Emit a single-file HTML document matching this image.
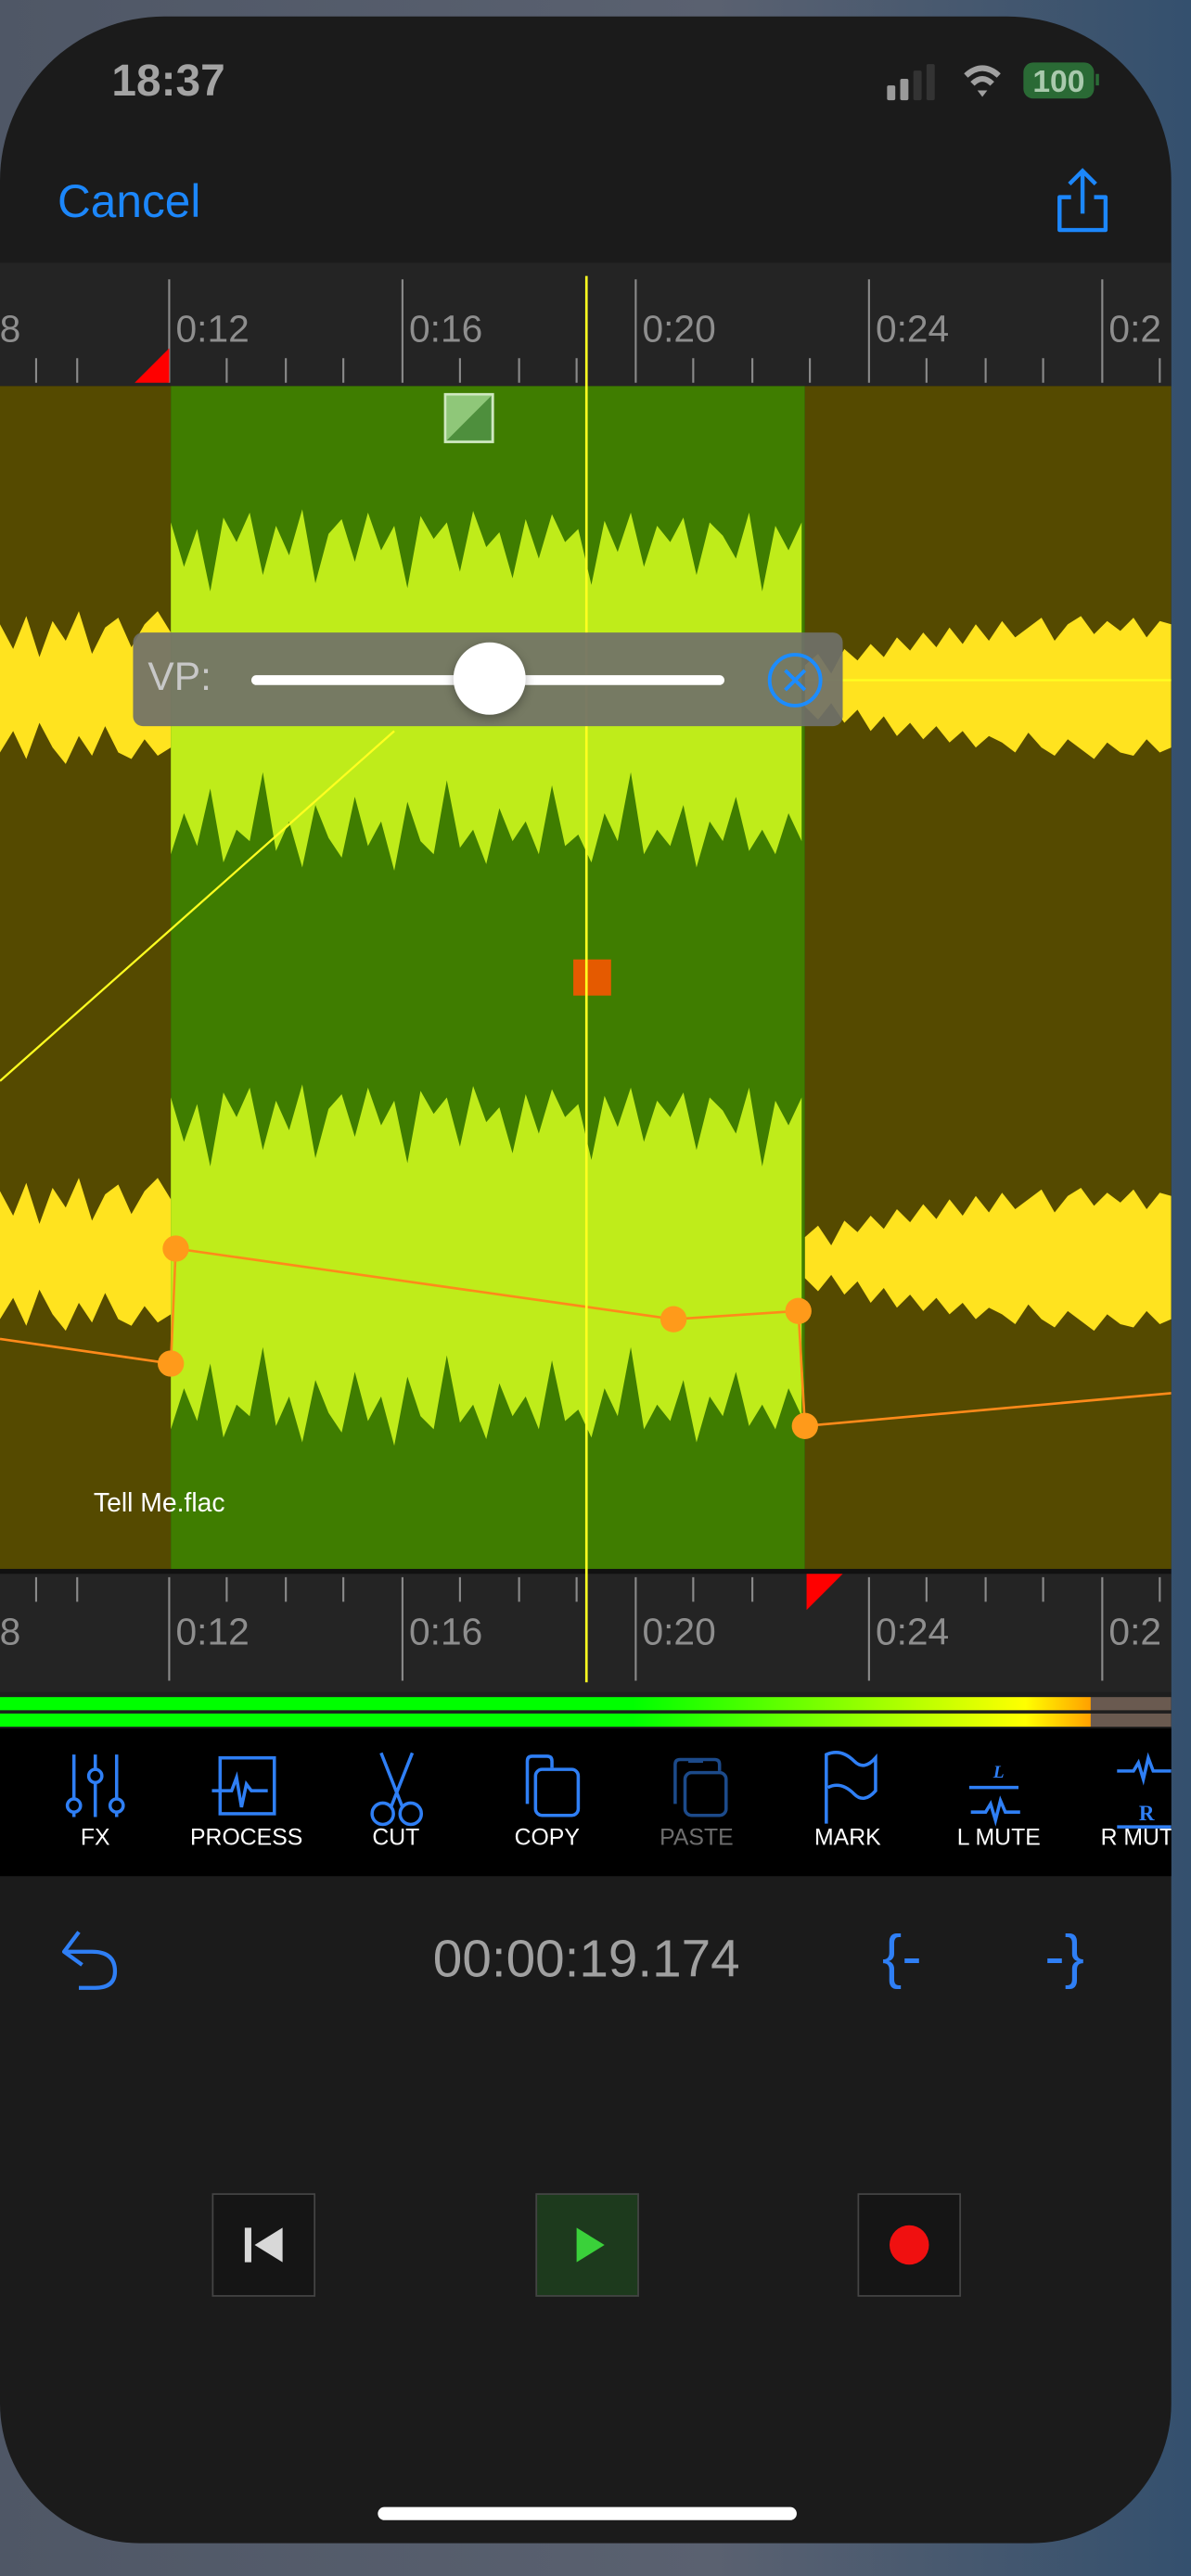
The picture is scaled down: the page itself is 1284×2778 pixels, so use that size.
<!DOCTYPE html>
<html><head><meta charset="utf-8"><style>
html,body{margin:0;padding:0;width:1284px;height:2778px;overflow:hidden;background:#4f5968;}
#bg{position:absolute;left:0;top:0;width:1284px;height:2778px;background:linear-gradient(90deg,#4f5766 0%,#5a6170 60%,#34506e 100%);}
#s{position:absolute;left:0;top:0;width:725px;height:1568px;transform:scale(1.7710,1.7717);transform-origin:0 0;font-family:"Liberation Sans",sans-serif;}
.abs{position:absolute;}
.lbl{position:absolute;color:#fff;font-size:14px;text-align:center;width:80px;top:1110px;}
</style></head><body><div id="bg"></div>
<div id="s">
 <div class="abs" style="left:0;top:10px;width:713px;height:1538px;background:#1b1b1b;border-radius:100px 100px 85px 85px;"></div>
 <div class="abs" style="left:68px;top:34px;color:#a3a3a3;font-size:27px;font-weight:600;">18:37</div>
 <svg class="abs" style="left:538px;top:36px" width="135" height="30">
  <rect x="2" y="16" width="5" height="9" rx="1" fill="#9a9a9a"/><rect x="10" y="12" width="5" height="13" rx="1" fill="#9a9a9a"/><rect x="18" y="7" width="5" height="18" rx="1" fill="#333"/><rect x="26" y="3" width="5" height="22" rx="1" fill="#333"/>
  <path d="M50 10 Q60 1 70 10" stroke="#a0a0a0" stroke-width="3.5" fill="none"/><path d="M54 15 Q60 9 66 15" stroke="#a0a0a0" stroke-width="3.5" fill="none"/><path d="M57 19 L60 23 L63 19 Z" fill="#a0a0a0"/>
  <rect x="85" y="2" width="43" height="22" rx="6" fill="#2a6a35"/><text x="106.5" y="20" text-anchor="middle" font-family="Liberation Sans" font-size="19" font-weight="bold" fill="#a9c9ad">100</text><rect x="129" y="9" width="2" height="7" fill="#2a6a35"/>
 </svg>
 <div class="abs" style="left:35px;top:107px;color:#1c87fb;font-size:28px;">Cancel</div>
 <svg class="abs" style="left:640px;top:100px" width="40" height="52"><path d="M19 4 V30 M11 12 L19 4 L27 12" stroke="#1c87fb" stroke-width="2.5" fill="none"/><path d="M12 20 H5 V40 H33 V20 H26" stroke="#1c87fb" stroke-width="2.5" fill="none" stroke-linejoin="round"/></svg>

 <svg class="abs" style="left:0;top:160px" width="713" height="75">
  <rect width="713" height="75" fill="#242424"/>
  <g stroke="#8a8a8a" stroke-width="1.2">
   <path d="M103 10V73M245 10V73M387 10V73M529 10V73M671 10V73"/>
   <path d="M22 58V73M47 58V73M138 58V73M174 58V73M209 58V73M280 58V73M316 58V73M351 58V73M422 58V73M458 58V73M493 58V73M564 58V73M600 58V73M635 58V73M706 58V73"/>
  </g>
  <g fill="#8e8e8e" font-family="Liberation Sans" font-size="23"><text x="-13" y="48">08</text><text x="107" y="48">0:12</text><text x="249" y="48">0:16</text><text x="391" y="48">0:20</text><text x="533" y="48">0:24</text><text x="675" y="48">0:2</text></g>
  <path d="M82 73 L103 52 V73 Z" fill="#f00"/>
 </svg>

 <svg class="abs" style="left:0;top:0" width="713" height="1538">
  <defs>
   <polygon id="selw" points="104,318 112,345 120,322 128,360 136,315 144,330 152,312 160,350 168,320 176,338 184,310 192,355 200,325 208,316 216,342 224,312 232,335 240,320 248,358 256,314 264,328 272,318 280,348 288,311 296,333 304,324 312,352 320,316 328,340 336,313 344,330 352,322 360,356 368,317 376,336 384,312 392,345 400,320 408,330 416,315 424,350 432,318 440,326 448,340 456,312 464,360 472,320 480,335 488,318 488,512 480,495 472,520 464,505 456,518 448,485 440,512 432,500 424,528 416,490 408,515 400,505 392,520 384,470 376,512 368,495 360,525 352,508 344,515 336,478 328,520 320,500 312,512 304,492 296,526 288,505 280,516 272,475 264,520 256,512 248,488 240,530 232,500 224,515 216,485 208,522 200,510 192,490 184,528 176,500 168,518 160,470 152,512 144,505 136,525 128,480 120,515 112,495 104,520"/>
   <polygon id="lw" points="0,380 8,395 16,375 24,400 32,378 40,390 48,372 56,398 64,382 72,376 80,394 88,380 96,372 104,385 104,455 96,460 88,450 80,462 72,458 64,442 56,460 48,448 40,465 32,455 24,440 16,462 8,445 0,458"/>
   <polygon id="rw" points="490,405 498,398 506,410 514,395 522,402 530,392 538,400 546,388 554,396 562,385 570,394 578,382 586,392 594,380 602,390 610,378 618,388 626,382 634,376 642,390 650,380 658,375 666,386 674,378 682,384 690,376 698,388 706,378 713,380 713,455 706,458 698,450 690,460 682,458 674,452 666,462 658,456 650,450 642,460 634,455 626,446 618,458 610,452 602,448 594,455 586,445 578,452 570,442 562,450 554,440 546,448 538,436 530,445 522,432 514,440 506,428 498,438 490,430"/>
  </defs>
  <rect x="0" y="235" width="104" height="720" fill="#554a00"/>
  <rect x="104" y="235" width="386" height="720" fill="#3f7d00"/>
  <rect x="490" y="235" width="223" height="720" fill="#554a00"/>
  <g fill="#ffe31f"><use href="#lw"/><use href="#rw"/><use href="#lw" y="345"/><use href="#rw" y="348"/></g>
  <g fill="#bfec1a"><use href="#selw"/><use href="#selw" y="350"/></g>
  <rect x="0" y="955" width="713" height="3" fill="#111"/>
  <rect x="271" y="240" width="29" height="29" fill="#8fc779" stroke="#cfe8c0" stroke-width="1.5"/><path d="M299 241 V268 H272 Z" fill="#4e8f3d"/>
  <path d="M0 658 L240 445" stroke="#ffff20" stroke-width="1.3"/>
  <path d="M490 414 H713" stroke="#ffff20" stroke-width="1.3"/>
  <rect x="349" y="584" width="23" height="22" fill="#e55a00"/>
  <path d="M0 815 L104 830 L107 760 L410 803 L486 798 L490 868 L713 848" stroke="#ff8a1a" stroke-width="1.5" fill="none"/>
  <g fill="#ff9a1a"><circle cx="104" cy="830" r="8"/><circle cx="107" cy="760" r="8"/><circle cx="410" cy="803" r="8"/><circle cx="486" cy="798" r="8"/><circle cx="490" cy="868" r="8"/></g>
  <text x="57" y="920" font-family="Liberation Sans" font-size="16" fill="#fff">Tell Me.flac</text>
  <rect x="0" y="958" width="713" height="72" fill="#242424"/>
  <g stroke="#8a8a8a" stroke-width="1.2">
   <path d="M103 960V1023M245 960V1023M387 960V1023M529 960V1023M671 960V1023"/>
   <path d="M22 960V975M47 960V975M138 960V975M174 960V975M209 960V975M280 960V975M316 960V975M351 960V975M422 960V975M458 960V975M564 960V975M600 960V975M635 960V975M706 960V975"/>
  </g>
  <g fill="#8e8e8e" font-family="Liberation Sans" font-size="23"><text x="-13" y="1001">08</text><text x="107" y="1001">0:12</text><text x="249" y="1001">0:16</text><text x="391" y="1001">0:20</text><text x="533" y="1001">0:24</text><text x="675" y="1001">0:2</text></g>
  <path d="M491 958 H513 L491 980 Z" fill="#f00"/>
  <path d="M357 168 V1024" stroke="#ffff20" stroke-width="1.5"/>
  <defs><linearGradient id="mg" x1="0" x2="1"><stop offset="0" stop-color="#00ff00"/><stop offset="0.58" stop-color="#00ff00"/><stop offset="0.94" stop-color="#ffff00"/><stop offset="1" stop-color="#ffa000"/></linearGradient></defs>
  <rect x="0" y="1030" width="713" height="22" fill="#1e1e1e"/>
  <rect x="0" y="1033" width="664" height="8" fill="url(#mg)"/><rect x="0" y="1043" width="664" height="8" fill="url(#mg)"/>
  <rect x="664" y="1033" width="49" height="8" fill="#6a5a50"/><rect x="664" y="1043" width="49" height="8" fill="#6a5a50"/>
 </svg>

 <div class="abs" style="left:81px;top:385px;width:432px;height:57px;background:rgba(112,112,105,0.92);border-radius:6px;"></div>
 <div class="abs" style="left:90px;top:399px;color:#c8c8c8;font-size:24px;">VP:</div>
 <div class="abs" style="left:153px;top:411px;width:288px;height:6px;background:#fff;border-radius:3px;"></div>
 <div class="abs" style="left:276px;top:391px;width:44px;height:44px;background:#fff;border-radius:50%;box-shadow:0 2px 6px rgba(0,0,0,.3);"></div>
 <svg class="abs" style="left:466px;top:396px" width="36" height="36"><circle cx="18" cy="18" r="15.5" stroke="#1c8cff" stroke-width="2.2" fill="none"/><path d="M12 12 L24 24 M24 12 L12 24" stroke="#1c8cff" stroke-width="2.2"/></svg>

 <div class="abs" style="left:0;top:1052px;width:713px;height:90px;background:#000;"></div>
 <svg class="abs" style="left:0;top:1042px" width="713" height="80" fill="none" stroke="#2f7ff5" stroke-width="2">
  <path d="M45 26V64M58 26V64M71 26V64"/><circle cx="45" cy="57" r="4" fill="#000"/><circle cx="58" cy="39" r="4" fill="#000"/><circle cx="71" cy="57" r="4" fill="#000"/>
  <rect x="134" y="28" width="33" height="34"/><path d="M129 48H141L144 40L147 58L150 44L153 48H163"/>
  <path d="M232 25L245 58M251 25L238 58"/><circle cx="233" cy="62" r="6.5"/><circle cx="250" cy="62" r="6.5"/>
  <path d="M321 56V30Q321 27 324 27H333Q336 27 336 30V34"/><rect x="326" y="35" width="26" height="28" rx="4"/>
  <g stroke="#1c4a8a"><path d="M411 56V32Q411 29 414 29H435Q438 29 438 32V36"/><rect x="417" y="37" width="25" height="26" rx="4"/><path d="M419 30H428"/></g>
  <path d="M503 68V26Q512 22 520 30Q526 36 533 28V48Q526 56 520 50Q512 42 504 46"/>
  <path d="M590 46H620M591 61H600L603 56L606 66L609 54L612 61H621"/>
  <path d="M680 36H690L693 31L696 41L699 28L702 36H713M680 70H713"/>
 </svg>
 <svg class="abs" style="left:0;top:1042px" width="713" height="80"><text x="608" y="40" text-anchor="middle" font-family="Liberation Serif" font-style="italic" font-weight="bold" font-size="11" fill="#2f7ff5">L</text><text x="698" y="66" text-anchor="middle" font-family="Liberation Serif" font-weight="bold" font-size="13" fill="#2f7ff5">R</text></svg>
 <div class="lbl" style="left:18px">FX</div>
 <div class="lbl" style="left:110px">PROCESS</div>
 <div class="lbl" style="left:201px">CUT</div>
 <div class="lbl" style="left:293px">COPY</div>
 <div class="lbl" style="left:384px;color:#6e6e6e">PASTE</div>
 <div class="lbl" style="left:476px">MARK</div>
 <div class="lbl" style="left:568px">L MUTE</div>
 <div class="lbl" style="left:660px;text-align:left;padding-left:10px;width:43px;overflow:hidden;white-space:nowrap">R MUTE</div>

 <svg class="abs" style="left:34px;top:1170px" width="44" height="44"><path d="M14 6L5 18L16 26M5 18H22Q36 18 36 30Q36 40 24 40H14" stroke="#2f7ff5" stroke-width="2.4" fill="none" stroke-linejoin="round"/></svg>
 <div class="abs" style="left:195px;top:1174px;width:324px;text-align:center;color:#a0a0a0;font-size:32px;">00:00:19.174</div>
 <div class="abs" style="left:537px;top:1170px;color:#2f7ff5;font-size:36px;">{-</div>
 <div class="abs" style="left:636px;top:1170px;color:#2f7ff5;font-size:36px;">-}</div>

 <div class="abs" style="left:129px;top:1335px;width:61px;height:61px;border:1px solid #444;background:#151515;"></div>
 <svg class="abs" style="left:129px;top:1335px" width="63" height="63"><rect x="20" y="21" width="4" height="21" fill="#d8d8d8"/><path d="M43 21V42L26 31.5Z" fill="#d8d8d8"/></svg>
 <div class="abs" style="left:326px;top:1335px;width:61px;height:61px;border:1px solid #444;background:#1d3a1d;"></div>
 <svg class="abs" style="left:326px;top:1335px" width="63" height="63"><path d="M25 21V42L42 31.5Z" fill="#3ad13a"/></svg>
 <div class="abs" style="left:522px;top:1335px;width:61px;height:61px;border:1px solid #444;background:#151515;"></div>
 <svg class="abs" style="left:522px;top:1335px" width="63" height="63"><circle cx="31.5" cy="31.5" r="12" fill="#f01010"/></svg>

 <div class="abs" style="left:230px;top:1526px;width:255px;height:8px;background:#fff;border-radius:4px;"></div>
</div>
</body></html>
